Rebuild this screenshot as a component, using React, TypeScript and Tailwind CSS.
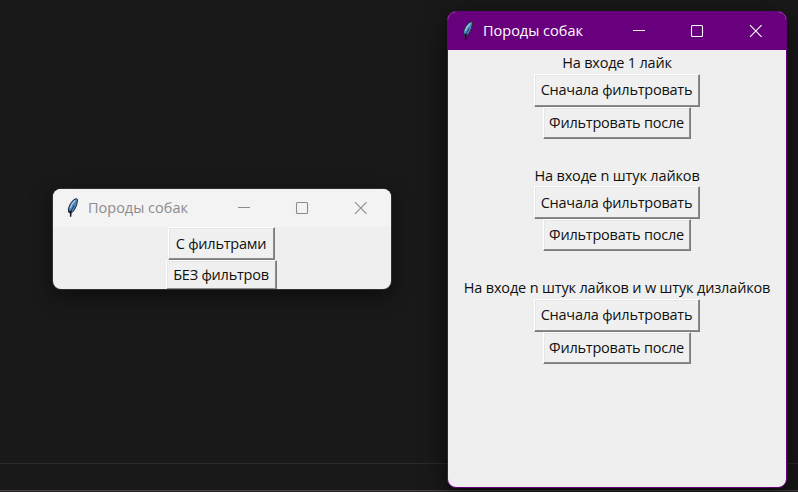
import type { ReactNode } from "react";

function Feather() {
  return (
    <svg width="16" height="22" viewBox="0 0 16 22" className="shrink-0">
      <path d="M11.4 1.6 L8.6 2.8 L5.4 6.6 L3.4 11.6 L3.6 15.2 L5.6 16.6 L9 13.6 L11.6 8.4 L12.6 2.4 Z" fill="#4b86c4" stroke="#23282f" strokeWidth="1" />
      <path d="M10.4 3.4 L7.2 6.8 L5.2 11" stroke="#a9cbe2" strokeWidth="1.3" fill="none" />
      <path d="M9.2 8.4 L7.6 11.2 L5.6 15.4" stroke="#1b3350" strokeWidth="0.9" fill="none" />
      <path d="M4.2 14.2 L5.8 14.8 L5.6 19.8" stroke="#11151c" strokeWidth="1.5" fill="none" />
    </svg>
  );
}

function Controls() {
  return (
    <svg width="132" height="14" viewBox="0 0 132 14" fill="none" stroke="currentColor" strokeWidth="1.1" className="shrink-0">
      <path d="M0 6.5h12" />
      <rect x="58.5" y="1.5" width="11" height="11" rx="1" />
      <path d="M117 1.2l11.6 11.6M128.6 1.2L117 12.8" />
    </svg>
  );
}

function Button({ children, className }: { children: ReactNode; className: string }) {
  return (
    <button
      className={`flex shrink-0 items-center justify-center whitespace-nowrap border border-t-white border-l-white border-r-[#7c7c7c] border-b-[#7c7c7c] bg-[#f0f0f0] pr-px tracking-[-0.23px] shadow-[inset_-1px_-1px_0_#8c8c8c,inset_1px_1px_0_#e6e6e6] ${className}`}
    >
      {children}
    </button>
  );
}

function Group({ label, className }: { label: string; className: string }) {
  return (
    <section className="flex h-[112.5px] flex-col items-center">
      <div className={`h-[23.5px] whitespace-nowrap leading-[25px] ${className}`}>{label}</div>
      <Button className="h-[33px] w-[166px]">Сначала фильтровать</Button>
      <Button className="h-8 w-[148px]">Фильтровать после</Button>
    </section>
  );
}

export default function App() {
  return (
    <main className="relative h-[492px] w-[798px] overflow-hidden bg-[#191919] font-['Open_Sans','Noto_Sans',sans-serif] text-[14.5px] text-[#101010]">
      <div className="h-[463px]" />
      <div className="h-px bg-[#2b2b2b]" />
      <div className="h-[26px]" />
      <div className="h-px bg-[#484343]" />
      <div className="h-px bg-[#252323]" />

      <div className="absolute top-[189px] left-[53px] h-[100px] w-[338px] overflow-hidden rounded-lg bg-[#efefef] shadow-[0_0_0_1px_#303030,0_6px_22px_#0008]">
        <header className="flex h-[38px] items-center bg-[#f3f3f3] pl-[12px] text-[#8c8c8c]">
          <Feather />
          <span className="ml-[7px] w-[150px] whitespace-nowrap">Породы собак</span>
          <Controls />
        </header>
        <div className="flex flex-col items-center pr-[1px]">
          <Button className="h-[33px] w-[107px] pr-[3px]">С фильтрами</Button>
          <Button className="h-[30px] w-[111px]">БЕЗ фильтров</Button>
        </div>
      </div>

      <div className="absolute top-[11px] left-[447px] h-[477px] w-[340px] overflow-hidden rounded-[9px] border border-[#68007e] bg-[#efefef] shadow-[0_8px_26px_#000a]">
        <header className="flex h-[38px] items-center bg-[#68007e] pl-[12px] text-white">
          <Feather />
          <span className="ml-[7px] w-[150px] whitespace-nowrap">Породы собак</span>
          <Controls />
        </header>
        <Group label="На входе 1 лайк" className="tracking-[-0.2px]" />
        <Group label="На входе n штук лайков" className="tracking-[-0.15px]" />
        <Group label="На входе n штук лайков и w штук дизлайков" className="tracking-[-0.16px]" />
      </div>
    </main>
  );
}
